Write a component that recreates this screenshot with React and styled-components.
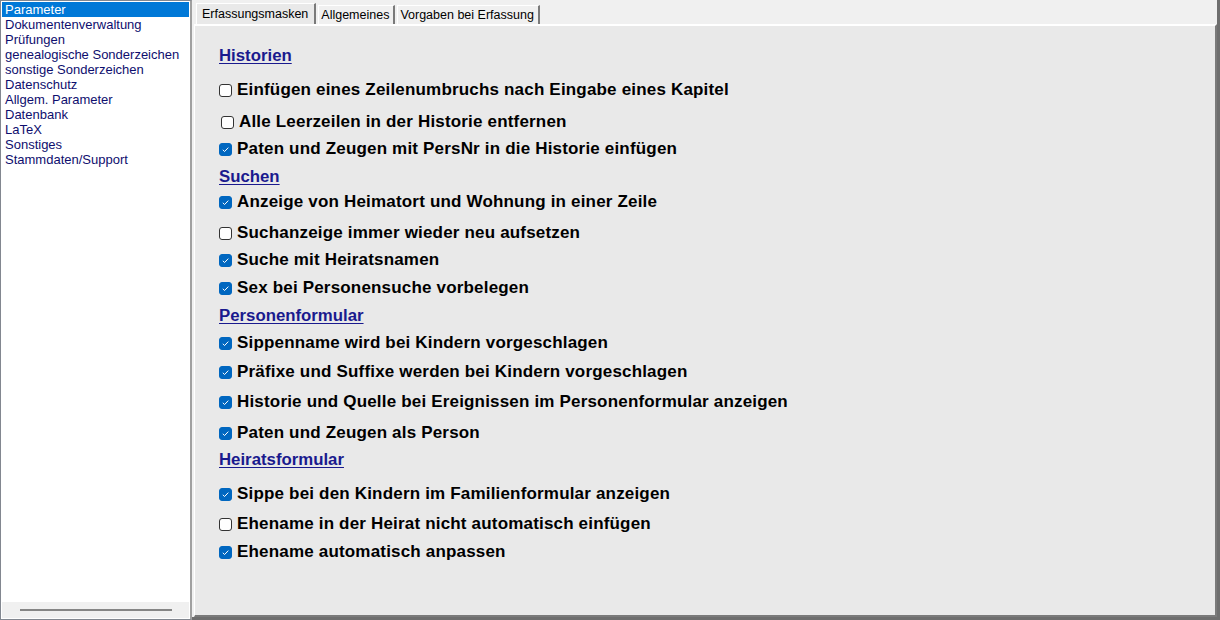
import React, { useState } from 'react';
import styled, { createGlobalStyle } from 'styled-components';

const GlobalStyle = createGlobalStyle`
  html, body {
    margin: 0;
    padding: 0;
    background: #f0f0f0;
  }
  body {
    font-family: "Liberation Sans", Arial, sans-serif;
  }
`;

const Window = styled.div`
  display: flex;
  width: 1220px;
  height: 620px;
  background: #f0f0f0;
  box-sizing: border-box;
`;

const Sidebar = styled.div`
  display: flex;
  flex-direction: column;
  width: 192px;
  height: 620px;
  box-sizing: border-box;
  background: #fff;
  border: 1px solid #828790;
  border-right: 2px solid #a0a0a0;
`;

const NavList = styled.ul`
  flex: 1;
  list-style: none;
  margin: 0;
  padding: 1px 1px 0;
`;

const NavItem = styled.li`
  height: 15px;
  line-height: 15px;
  padding-left: 3px;
  font-size: 13px;
  color: ${p => (p.$active ? '#fff' : '#0e0e6e')};
  background: ${p => (p.$active ? '#0078d7' : 'transparent')};
  white-space: nowrap;
  cursor: default;
`;

const ScrollTrack = styled.div`
  display: flex;
  align-items: center;
  height: 16px;
  margin: 0 1px 1px;
  background: #f0f0f0;
`;

const ScrollThumb = styled.div`
  width: 152px;
  height: 2px;
  margin-left: 18px;
  background: #858585;
`;

const Main = styled.div`
  flex: 1;
  display: flex;
  flex-direction: column;
  padding: 3px 0 0 2px;
  border-right: 3px solid #6e6e6e;
  border-bottom: 3px solid #6e6e6e;
  box-sizing: border-box;
  background: #f0f0f0;
`;

const TabBar = styled.div`
  display: flex;
  align-items: flex-end;
  height: 21px;
  padding-left: 2px;
`;

const Tab = styled.div`
  height: ${p => (p.$active ? 20 : 18)}px;
  line-height: ${p => (p.$active ? 20 : 18)}px;
  padding: 0 ${p => (p.$active ? 6 : 4)}px 0 ${p => (p.$active ? 5 : 2)}px;
  margin-right: 2px;
  font-size: 12.5px;
  color: #000;
  background: ${p => (p.$active ? '#e9e9e9' : '#f0f0f0')};
  border-left: 1px solid #fff;
  border-top: 1px solid #fff;
  border-right: 2px solid #7a7a7a;
  box-sizing: content-box;
  white-space: nowrap;
  cursor: default;
`;

const Panel = styled.div`
  flex: 1;
  display: flex;
  flex-direction: column;
  background: #e9e9e9;
  border-top: 2px solid #fff;
  border-left: 1px solid #fff;
  border-right: 2px solid #7a7a7a;
  border-bottom: 2px solid #7a7a7a;
  padding: 20px 0 0 24px;
  box-sizing: border-box;
`;

const Heading = styled.div`
  height: 20px;
  line-height: 20px;
  margin-top: ${p => p.$gap}px;
  font-size: 16.8px;
  font-weight: bold;
  color: #1a1a8e;
  text-decoration: underline;
  text-underline-offset: 2px;
`;

const Option = styled.label`
  display: flex;
  align-items: center;
  gap: 5px;
  height: 20px;
  margin-top: ${p => p.$gap}px;
  margin-left: ${p => p.$indent || 0}px;
  font-size: 17px;
  letter-spacing: 0.18px;
  font-weight: bold;
  color: #000;
  cursor: default;
  white-space: nowrap;
`;

const Box = styled.span`
  display: inline-flex;
  align-items: center;
  justify-content: center;
  width: 13px;
  height: 13px;
  box-sizing: border-box;
  border-radius: 3px;
  border: 1px solid ${p => (p.$checked ? '#0067c0' : '#333')};
  background: ${p => (p.$checked ? '#0067c0' : '#fff')};
  flex-shrink: 0;
`;

const Check = () => (
  <svg width="9" height="9" viewBox="0 0 9 9">
    <path d="M1.8 4.8 L3.6 6.5 L7.3 2.6" fill="none" stroke="#fff" strokeWidth="1" />
  </svg>
);

const navItems = [
  'Parameter',
  'Dokumentenverwaltung',
  'Prüfungen',
  'genealogische Sonderzeichen',
  'sonstige Sonderzeichen',
  'Datenschutz',
  'Allgem. Parameter',
  'Datenbank',
  'LaTeX',
  'Sonstiges',
  'Stammdaten/Support',
];

const tabs = ['Erfassungsmasken', 'Allgemeines', 'Vorgaben bei Erfassung'];

const rows = [
  { type: 'h', text: 'Historien', gap: 0 },
  { text: 'Einfügen eines Zeilenumbruchs nach Eingabe eines Kapitel', checked: false, gap: 14 },
  { text: 'Alle Leerzeilen in der Historie entfernen', checked: false, gap: 12, indent: 2 },
  { text: 'Paten und Zeugen mit PersNr in die Historie einfügen', checked: true, gap: 7 },
  { type: 'h', text: 'Suchen', gap: 8 },
  { text: 'Anzeige von Heimatort und Wohnung in einer Zeile', checked: true, gap: 5 },
  { text: 'Suchanzeige immer wieder neu aufsetzen', checked: false, gap: 11 },
  { text: 'Suche mit Heiratsnamen', checked: true, gap: 7 },
  { text: 'Sex bei Personensuche vorbelegen', checked: true, gap: 8 },
  { type: 'h', text: 'Personenformular', gap: 8 },
  { text: 'Sippenname wird bei Kindern vorgeschlagen', checked: true, gap: 7 },
  { text: 'Präfixe und Suffixe werden bei Kindern vorgeschlagen', checked: true, gap: 9 },
  { text: 'Historie und Quelle bei Ereignissen im Personenformular anzeigen', checked: true, gap: 10 },
  { text: 'Paten und Zeugen als Person', checked: true, gap: 11 },
  { type: 'h', text: 'Heiratsformular', gap: 7 },
  { text: 'Sippe bei den Kindern im Familienformular anzeigen', checked: true, gap: 14 },
  { text: 'Ehename in der Heirat nicht automatisch einfügen', checked: false, gap: 10 },
  { text: 'Ehename automatisch anpassen', checked: true, gap: 8 },
];

const App = () => {
  const [active, setActive] = useState(0);
  const [tab, setTab] = useState(0);
  const [values, setValues] = useState(() => rows.map(r => !!r.checked));

  const toggle = i => {
    setValues(prev => prev.map((v, j) => (j === i ? !v : v)));
  };

  return (
    <>
      <GlobalStyle />
      <Window>
        <Sidebar>
          <NavList>
            {navItems.map((item, i) => (
              <NavItem key={item} $active={i === active} onClick={() => setActive(i)}>
                {item}
              </NavItem>
            ))}
          </NavList>
          <ScrollTrack>
            <ScrollThumb />
          </ScrollTrack>
        </Sidebar>
        <Main>
          <TabBar>
            {tabs.map((t, i) => (
              <Tab key={t} $active={i === tab} onClick={() => setTab(i)}>
                {t}
              </Tab>
            ))}
          </TabBar>
          <Panel>
            {rows.map((r, i) =>
              r.type === 'h' ? (
                <Heading key={r.text} $gap={r.gap}>
                  {r.text}
                </Heading>
              ) : (
                <Option key={r.text} $gap={r.gap} $indent={r.indent} onClick={() => toggle(i)}>
                  <Box $checked={values[i]}>{values[i] && <Check />}</Box>
                  {r.text}
                </Option>
              )
            )}
          </Panel>
        </Main>
      </Window>
    </>
  );
};

export default App;
